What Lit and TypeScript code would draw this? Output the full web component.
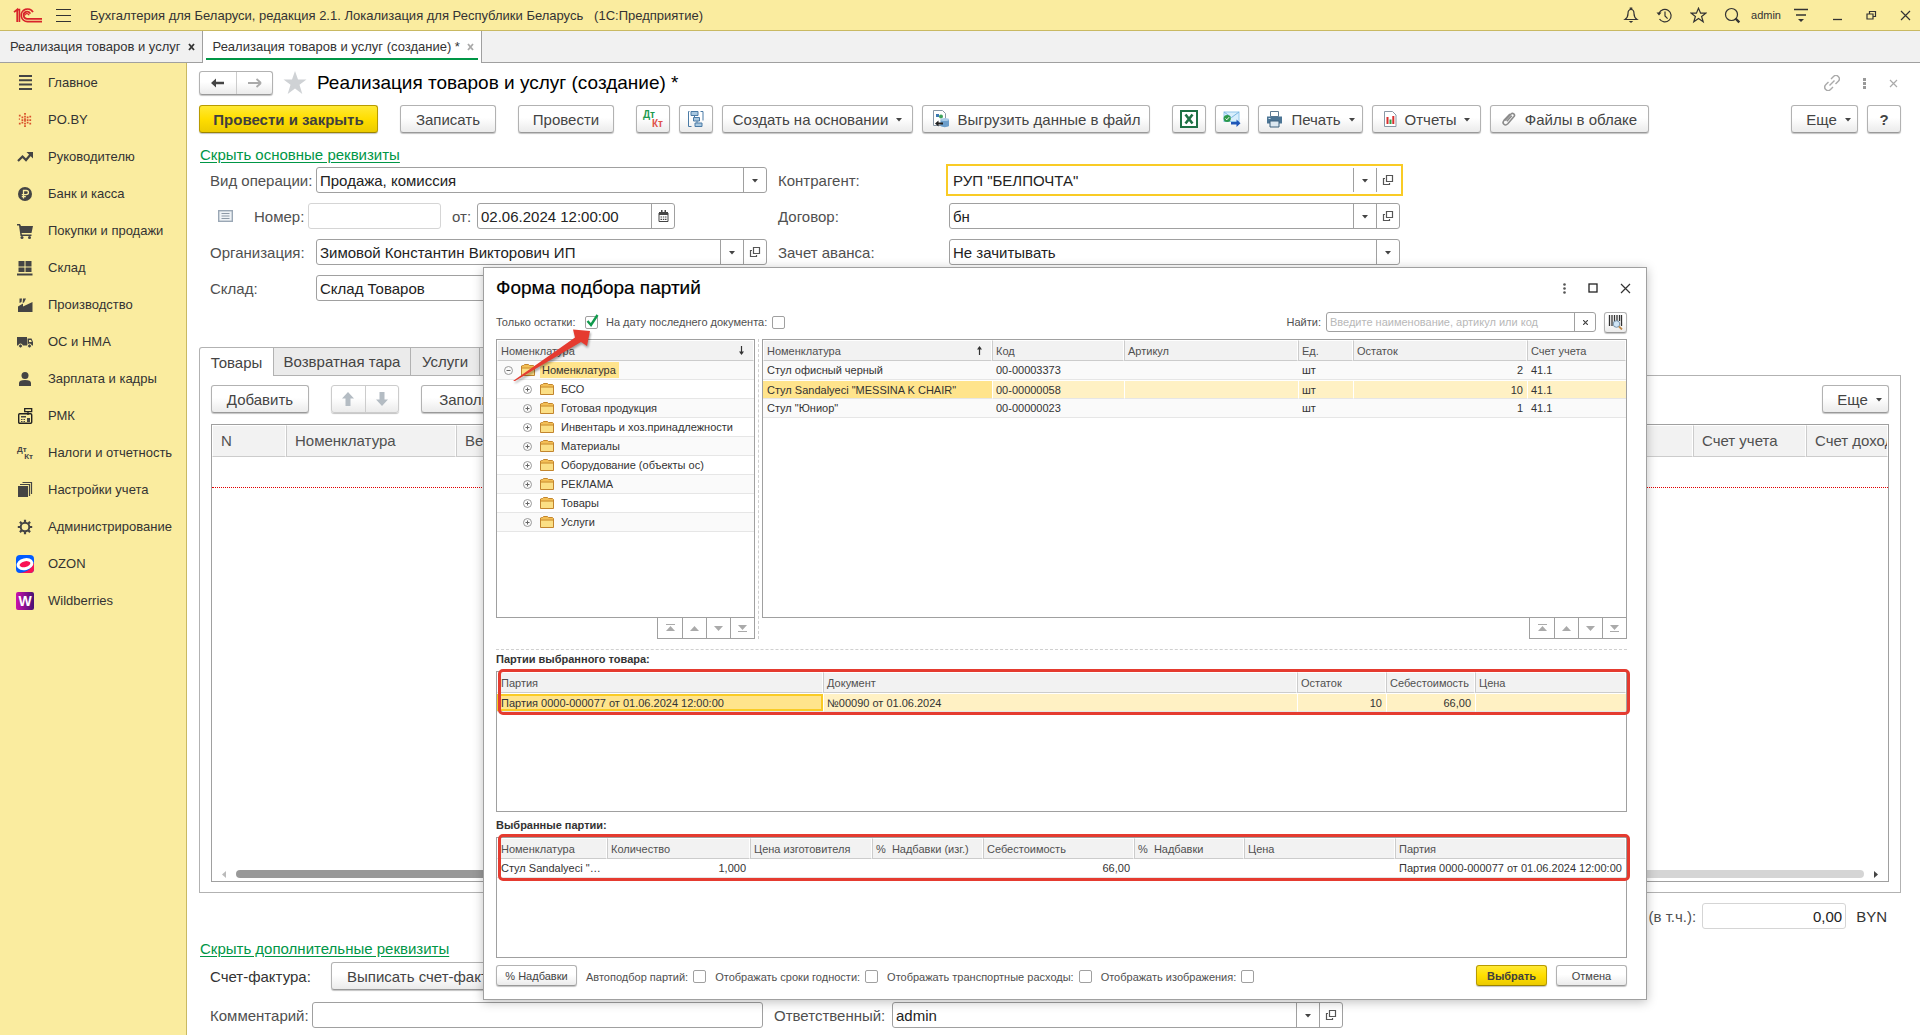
import { LitElement, html, svg, css, nothing, TemplateResult } from "lit";
import { customElement, property } from "lit/decorators.js";
import { classMap } from "lit/directives/class-map.js";

const icon = (body: unknown, w = 16, h = 16, box = `0 0 ${w} ${h}`) =>
  html`<svg width=${w} height=${h} viewBox=${box} fill="none" aria-hidden="true">${body}</svg>`;

const I: Record<string, () => TemplateResult> = {
  logo: () => icon(svg`<g stroke="#d8232a" stroke-width="1.7"><path d="M1 5.2 4.2 2.6V15M4.2 2.6H6.4V15"/><path d="M20 5.2A6.3 6.3 0 1 0 14.6 14.6H29"/><path d="M17.4 6.6A3.6 3.6 0 1 0 14.6 11.8H29"/><path d="M11.5 8.6a2.4 2.4 0 0 1 4.6-.4" stroke-width="1.3"/></g>`, 29, 17),
  burger: () => icon(svg`<path d="M0 1.5h15M0 7.5h15M0 13.5h15" stroke="#333" stroke-width="1.2"/>`, 15, 15),
  bell: () => icon(svg`<path d="M2 12.5c2-1.500 3-3 3-6C5 3.500 6.300 2.500 8 2.500s3 1 3 4c0 3 1 4.500 3 6zM7.300 2.300V1h1.400v1.300" stroke="#333" stroke-width="1.200"/><path d="M5.800 14h4.400L8 16z" fill="#333"/>`, 16, 17),
  history: () => icon(svg`<path d="M3 6.200A6.300 6.300 0 1 1 3.500 12M9 4.500V9l2.600 2.600" stroke="#333" stroke-width="1.200"/><path d="M.5 5.500h5L3 8.500z" fill="#333"/>`, 17, 17),
  star: () => icon(svg`<path d="M8.500 1.200l2.100 5h5.200l-4.200 3.300 1.600 5.300-4.700-3.200-4.700 3.200 1.600-5.300L1.200 6.200h5.200z" stroke="#333" stroke-width="1.200"/>`, 17, 17),
  search: () => icon(svg`<circle cx="7.500" cy="7.500" r="6" stroke="#333" stroke-width="1.200"/><path d="M11.500 11.500l3.800 3.800" stroke="#333" stroke-width="2.400"/>`, 17, 17),
  lines: () => icon(svg`<path d="M1 2.500h14M3 8h10" stroke="#333" stroke-width="1.300"/><path d="M5 12h6l-3 3z" fill="#333"/>`, 16, 16),
  min: () => icon(svg`<path d="M1 9.500h9" stroke="#333" stroke-width="1.300"/>`, 11, 11),
  restore: () => icon(svg`<path d="M1 4h6v5H1zM3.500 4V1.500H9.500v5H7" stroke="#333" stroke-width="1.200"/>`, 11, 11),
  close: () => icon(svg`<path d="M1 1l9 9M10 1l-9 9" stroke="#333" stroke-width="1.200"/>`, 11, 11),
  closeGrey: () => icon(svg`<path d="M1 1l7 7M8 1l-7 7" stroke="#aaa" stroke-width="1.200"/>`, 9, 9),
  tabClose: () => icon(svg`<path d="M1 1l5 6M6 1l-5 6" stroke="currentColor" stroke-width="1.800"/>`, 7, 8),
  link: () => icon(svg`<g stroke="#aaa" stroke-width="1.400"><path d="M7 4l2.500-2.500a3.300 3.300 0 0 1 4.800 4.700L11.500 9M9 12l-2.500 2.500a3.300 3.300 0 0 1-4.800-4.700L4.500 7M5.500 10.500l5-5"/></g>`, 16, 16),
  dotsGrey: () => icon(svg`<g fill="#999"><rect width="3" height="3"/><rect y="4" width="3" height="3"/><rect y="8" width="3" height="3"/></g>`, 3, 11),
  dots: () => icon(svg`<g fill="#555"><circle cx="1.500" cy="1.500" r="1.300"/><circle cx="1.500" cy="5.500" r="1.300"/><circle cx="1.500" cy="9.500" r="1.300"/></g>`, 3, 11),
  square: () => icon(svg`<rect x="1" y="1" width="8" height="8" stroke="#222" stroke-width="1.300"/>`, 10, 10),
  back: () => icon(svg`<path d="M1 6l5-4.500v3.200h8v2.600H6v3.200z" fill="#444"/>`, 15, 12),
  fwd: () => icon(svg`<path d="M14 6L9.500 2M14 6l-4.500 4M13 6H1" stroke="#aaa" stroke-width="1.800"/>`, 15, 12),
  bigStar: () => icon(svg`<path d="M12 0l3 8.500h8.500l-7 5.200 2.800 9.300L12 17.500 4.700 23l2.800-9.300L.5 8.500H9z" fill="#cfd2d5"/>`, 24, 24),
  caret: () => icon(svg`<path d="M0 1h6L3 4.500z" fill="#444"/>`, 6, 5),
  open: () => icon(svg`<path d="M4.500 1.500h6v6h-6zM3 4.500H1.500v6h6V9" stroke="#555" stroke-width="1.200"/>`, 12, 12),
  calendar: () => icon(svg`<path d="M1 3h9v8.500H1z" stroke="#444"/><path d="M1 2h9v3H1zM3 0h1.500v3H3zM6.500 0H8v3H6.500z" fill="#444"/><path d="M2.500 7H4M4.800 7h1.500M7 7h1.500M2.500 9.300H4M4.800 9.300h1.500M7 9.300h1.500" stroke="#444" stroke-width="1.200"/>`, 11, 12),
  note: () => icon(svg`<rect x=".7" y=".7" width="13.600" height="10.600" stroke="#9aa7b5" stroke-width="1.400" fill="#eef2f6"/><path d="M3.500 3.500h8M3.500 6h8M3.500 8.500h8" stroke="#8d99a6"/>`, 15, 12),
  struct: () => icon(svg`<g stroke="#4b7ba6"><path d="M4 1.500h7v4H4zM6.500 7.500h6v3.500h-6zM8 13h7v3.500H8z" fill="#a9c8e0"/><path d="M2.500 1.500h-1v15h3M13.500 1.500h2.500v9M7.500 5.500v2M10 11v2"/></g>`, 18, 18),
  upload: () => icon(svg`<path d="M1.500.5h9l3 3v12h-12z" fill="#fff" stroke="#8796a5"/><path d="M4 4h3v3H4z" fill="#3c78b4"/><circle cx="9" cy="6.500" r="2" fill="#3fa35b"/><path d="M8.500 9.500h8.500v6.500c-2 1.500-6.500 1.500-8.500 0z" fill="#6c9ecb"/><ellipse cx="12.800" cy="9.500" rx="4.200" ry="1.500" fill="#a9cbe8"/><path d="M3 13.500l3.500-3v2H11v2H6.500v2z" fill="#222"/>`, 18, 18),
  excel: () => icon(svg`<rect x="1" y="1" width="16" height="16" fill="#fff" stroke="#1d7044" stroke-width="2"/><path d="M5.500 4.500l7 9M12.500 4.500l-7 9" stroke="#1d7044" stroke-width="2.600"/>`, 18, 18),
  mail: () => icon(svg`<rect x="1" y="2" width="15" height="9.500" fill="#d8eefc" stroke="#90c5ea"/><path d="M1 2l7.500 5.500L16 2" stroke="#78b5e0"/><circle cx="4.200" cy="8.500" r="3.600" fill="#2c9a4b"/><path d="M2.500 8.500l1.300 1.300 2.300-2.600" stroke="#fff"/><path d="M8 12h5.500V9.500L17.500 13.200 13.500 17v-2.500H8z" fill="#1f56b8"/>`, 18, 18),
  print: () => icon(svg`<path d="M4.500.5h8v5h-8z" fill="#fff" stroke="#5f7b93"/><path d="M1 5.500h15v7H1z" fill="#4c7595"/><path d="M4 10h9v6H4z" fill="#dce8f1" stroke="#3c607d"/><path d="M2.500 7.500h2" stroke="#cfe1ef"/>`, 17, 17),
  report: () => icon(svg`<path d="M1.500.5h8l3.500 3.500v11.500h-11.500z" fill="#fff" stroke="#8a98a5"/><path d="M3.500 6h2v7h-2z" fill="#d92e2e"/><path d="M6.500 8.500h2V13h-2z" fill="#2e9e46"/><path d="M9.300 5h2v8h-2z" fill="#d92e2e"/>`, 14, 16),
  clip: () => icon(svg`<path d="M3 9.500l6-6.500c1.800-1.800 4.600.6 3 2.600L5.800 12.800c-2.800 2.800-6.300-.4-3.800-3.400L8 3M4.800 10.300l5-5.500" stroke="#8b8b8b" stroke-width="1.600"/>`, 15, 16),
  up: () => icon(svg`<path d="M7 0l6 6.500h-3.500V14h-5V6.500H1z" fill="#b4bcc3"/>`, 14, 14),
  down: () => icon(svg`<path d="M7 14l6-6.500h-3.500V0h-5v7.500H1z" fill="#b4bcc3"/>`, 14, 14),
  barcode: () => icon(svg`<path d="M1.500 0v11M4 0v11M6.500 0v8M9 0v6M11.500 0v6M13.500 0v11" stroke="#333" stroke-width="1.300"/><circle cx="8.500" cy="9" r="3.300" fill="#cfe4f5" stroke="#7894ab"/><path d="M11 11.500l3 3" stroke="#c08a4a" stroke-width="1.800"/>`, 15, 15),
  plus: () => icon(svg`<circle cx="4.500" cy="4.500" r="4" stroke="#999"/><path d="M2.500 4.500h4M4.500 2.500v4" stroke="#666"/>`, 9, 9),
  minus: () => icon(svg`<circle cx="4.500" cy="4.500" r="4" stroke="#999"/><path d="M2.500 4.500h4" stroke="#666"/>`, 9, 9),
  folder: () => icon(svg`<path d="M.5 11.500v-9.500l1-.5h1l1-1h4l1 1h4l1 1v9z" fill="#f3bf55" stroke="#c2852e"/><path d="M1 4.500h12v6.500H1z" fill="#fbdf85"/><path d="M.5 4h13" stroke="#c2852e" stroke-width=".8"/>`, 14, 12),
  first: () => icon(svg`<path d="M0 .5h9" stroke="#aaa"/><path d="M0 7l4.500-5L9 7z" fill="#aaa"/>`, 9, 8),
  prev: () => icon(svg`<path d="M0 6l4.500-5L9 6z" fill="#aaa"/>`, 9, 7),
  next: () => icon(svg`<path d="M0 1l4.500 5L9 1z" fill="#aaa"/>`, 9, 7),
  last: () => icon(svg`<path d="M0 7.500h9" stroke="#aaa"/><path d="M0 1l4.500 5L9 1z" fill="#aaa"/>`, 9, 8),
  sortDown: () => icon(svg`<path d="M3.500 0v8" stroke="#333" stroke-width="1.200"/><path d="M1 5.500h5L3.500 9z" fill="#333"/>`, 7, 9),
  sortUp: () => icon(svg`<path d="M3.500 9V1" stroke="#333" stroke-width="1.200"/><path d="M1 3.500h5L3.500 0z" fill="#333"/>`, 7, 9),
  triL: () => icon(svg`<path d="M5 0v7L1 3.500z" fill="#bbb"/>`, 5, 7),
  triR: () => icon(svg`<path d="M0 0v7l4-3.500z" fill="#444"/>`, 5, 7),
  // sidebar
  main: () => icon(svg`<path d="M2 2h13M2 6.300h13M2 10.600h13M2 15h13" stroke="#444" stroke-width="2"/>`, 16, 17),
  poby: () => icon(svg`<g fill="#d9512c"><path d="M7 0h2v2H7zM7 3h2v2H7zM7 6h2v4H7zM7 11h2v2H7zM7 14h2v2H7zM4 4h2v2H4zM10 4h2v2h-2zM4 7h2v2H4zM10 7h2v2h-2zM4 10h2v2H4zM10 10h2v2h-2zM1 2h2v2H1zM13 3h2v2h-2zM1 6h1v2H1zM13 7h2v2h-2zM1 11h2v2H1zM13 11h2v2h-2z"/></g>`, 14, 14, "0 0 16 16"),
  trend: () => icon(svg`<path d="M1 12l4.500-4.500L9 11l5-6" stroke="#444" stroke-width="2.200"/><path d="M9.500 3H16v6.500z" fill="#444"/>`),
  bank: () => icon(svg`<circle cx="8" cy="8" r="7" fill="#444"/><path d="M6.500 12.500v-8h2.700c3 0 3 4.200 0 4.200H4.800M4.800 10.700h4" stroke="#faec9f" stroke-width="1.300"/>`),
  cart: () => icon(svg`<path d="M0 1h3l1 2h12l-1.500 7H4.500L5 11.500h9.500V13H3.500L2 2.500H0z" fill="#444"/><circle cx="5" cy="14.500" r="1.500" fill="#444"/><circle cx="12.500" cy="14.500" r="1.500" fill="#444"/>`),
  store: () => icon(svg`<path d="M1.500 1h6v5.500h-6zM8.500 1h6v5.500h-6zM1.500 7.500h6V12h-6zM8.500 7.500h6V12h-6zM0 13.500h15.500v2H0z" fill="#444"/>`),
  factory: () => icon(svg`<path d="M1 15V9.500L6 6.500V9.500L15.500 5v10zM2.500 1.500H5L4.500 5 2.500 6zM6 1.500h3L7 5.500 5.700 6z" fill="#444"/>`),
  truck: () => icon(svg`<path d="M0 3h10v8.500H0zM10.500 4.500h4L16 8v3.500h-5.500z" fill="#444"/><path d="M12 6h2l.8 2H12z" fill="#faec9f"/><circle cx="3.500" cy="12" r="2" fill="#444" stroke="#faec9f"/><circle cx="12.500" cy="12" r="2" fill="#444" stroke="#faec9f"/>`),
  person: () => icon(svg`<circle cx="8" cy="4.500" r="3.500" fill="#444"/><path d="M2 15v-3c0-2 2-3 6-3s6 1 6 3v3z" fill="#444"/>`),
  pos: () => icon(svg`<rect x="1.700" y="5.700" width="13" height="9.600" rx="1" stroke="#222" stroke-width="1.400"/><path d="M7.700.7h7v3h-7zM11 4v3" stroke="#222" stroke-width="1.300"/><path d="M4 8h5v1.500H4zM4 11h1.500v1H4zM6.500 11H8v1H6.500zM4 13h1.500v1H4zM6.500 13H8v1H6.500zM10 10h3v4h-3z" fill="#444"/>`),
  books: () => icon(svg`<path d="M1 5h10v11H1z" fill="#444"/><path d="M3 3.500h9.500V15M5.500 1.500h9V13" stroke="#444" stroke-width="1.200"/>`, 16, 17),
  gear: () => icon(svg`<circle cx="8" cy="8" r="4.300" stroke="#444" stroke-width="2"/><path d="M8 .8v2.700M8 12.500v2.700M.8 8h2.700M12.500 8h2.700M2.900 2.900l1.900 1.900M11.200 11.200l1.900 1.900M13.100 2.900l-1.900 1.900M4.800 11.200l-1.900 1.900" stroke="#444" stroke-width="2.200"/>`),
  ozon: () => icon(svg`<rect width="18" height="18" rx="4" fill="#005bff"/><path d="M2 18c8 0 14-4 16-11v7a4 4 0 0 1-4 4z" fill="#f91155"/><ellipse cx="9" cy="9.200" rx="7" ry="4.400" transform="rotate(-14 9 9.200)" fill="#f91155" stroke="#fff" stroke-width="3"/>`, 18, 18),
};

const dtkt = () => html`<span class="dtkt"><b>Дт</b><b>Кт</b></span>`;

const base = css`
  *, *::before, *::after { box-sizing: border-box; }
  svg { display: block; flex: none; }
  button, input, select { font: inherit; color: inherit; margin: 0; }
  button {
    display: inline-flex; align-items: center; justify-content: center; gap: 8px;
    padding: 0; border: 0; background: none; white-space: nowrap;
  }
  .btn {
    height: 28px; border: 1px solid #b2b2b2; border-bottom-color: #999; border-radius: 3px;
    background: linear-gradient(#fff 45%, #ebebeb); box-shadow: 0 1px 1px #c4c4c4; color: #444;
  }
  .primary {
    border-color: #b89b00; border-bottom-color: #9c8400; font-weight: bold; color: #3f3f3f;
    background: linear-gradient(#ffe935, #ffde00 50%, #eccb00);
  }
  .field {
    display: flex; height: 26px; border: 1px solid #a0a0a0; border-radius: 3px; background: #fff;
    color: #222; overflow: hidden;
  }
  .field input { flex: 1; min-width: 0; width: 0; border: 0; padding: 0 3px; background: none; outline: 0; }
  .field button { width: 23px; border-left: 1px solid #a0a0a0; }
  table { border-collapse: separate; border-spacing: 0; table-layout: fixed; width: 100%; }
  th, td { font-weight: normal; text-align: left; white-space: nowrap; overflow: hidden; padding: 0; }
`;

@customElement("top-bar")
export class TopBar extends LitElement {
  static styles = [base, css`
    :host {
      display: flex; align-items: center; height: 31px; padding: 0 9px 0 13px; background: #faec9f;
      border-bottom: 1px solid #c9b962; font-size: 13px; color: #333;
    }
    .menu { margin: 0 19px 0 14px; }
    .name { flex: 1; white-space: pre; }
    .tools { display: flex; align-items: center; gap: 17px; }
    .user { font-size: 11px; margin: 0 -5px 0 -7px; }
    .win { display: flex; align-items: center; gap: 23px; margin-left: 6px; }
  `];
  render() {
    return html`
      ${I.logo()}
      <button class="menu" aria-label="Меню">${I.burger()}</button>
      <span class="name">Бухгалтерия для Беларуси, редакция 2.1. Локализация для Республики Беларусь   (1С:Предприятие)</span>
      <div class="tools">
        <button aria-label="Уведомления">${I.bell()}</button>
        <button aria-label="История">${I.history()}</button>
        <button aria-label="Избранное">${I.star()}</button>
        <button aria-label="Поиск">${I.search()}</button>
        <span class="user">admin</span>
        <button aria-label="Настройки">${I.lines()}</button>
        <div class="win">
          <button aria-label="Свернуть">${I.min()}</button>
          <button aria-label="Восстановить">${I.restore()}</button>
          <button aria-label="Закрыть">${I.close()}</button>
        </div>
      </div>`;
  }
}

@customElement("side-nav")
export class SideNav extends LitElement {
  static styles = [base, css`
    :host { display: block; background: #faec9f; border-right: 1px solid #c9b962; font-size: 13px; padding-top: 1px; }
    a {
      display: flex; align-items: center; height: 37px; gap: 14px; padding-left: 16px;
      color: #333; text-decoration: none; white-space: nowrap;
    }
    .ico { width: 18px; display: flex; justify-content: center; }
    .dtkt { display: flex; flex-direction: column; font-size: 8px; line-height: 7px; color: #444; width: 16px; }
    .dtkt b:last-child { text-align: right; }
    .wb {
      width: 18px; height: 18px; border-radius: 2px; color: #fff; font-weight: bold; font-size: 14px;
      line-height: 18px; text-align: center; background: linear-gradient(90deg, #cb11ab, #481173);
    }
  `];
  render() {
    const items: [TemplateResult, string][] = [
      [I.main(), "Главное"], [I.poby(), "PO.BY"], [I.trend(), "Руководителю"], [I.bank(), "Банк и касса"],
      [I.cart(), "Покупки и продажи"], [I.store(), "Склад"], [I.factory(), "Производство"],
      [I.truck(), "ОС и НМА"], [I.person(), "Зарплата и кадры"], [I.pos(), "РМК"],
      [dtkt(), "Налоги и отчетность"], [I.books(), "Настройки учета"], [I.gear(), "Администрирование"],
      [I.ozon(), "OZON"], [html`<span class="wb">W</span>`, "Wildberries"],
    ];
    return html`<nav>${items.map(([i, t]) => html`<a href="#"><span class="ico">${i}</span>${t}</a>`)}</nav>`;
  }
}

type Col = { t: string; w?: number; right?: boolean; sort?: "up" | "down" };
type Row = { cells: unknown[]; selected?: boolean };

@customElement("data-grid")
export class DataGrid extends LitElement {
  @property({ attribute: false }) cols: Col[] = [];
  @property({ attribute: false }) rows: Row[] = [];
  @property({ type: Boolean }) focused = false;
  @property({ type: Boolean }) plain = false;
  static styles = [base, css`
    :host { display: block; border: 1px solid #a0a0a0; background: #fff; overflow: hidden; font-size: 11px; color: #333; }
    th {
      height: 21px; padding: 0 3px; color: #505050; background: #f2f2f2; border: 1px solid #fff;
      border-bottom: 1px solid #ccc;
    }
    th + th { border-left: 1px solid #ccc; }
    .head { display: flex; justify-content: space-between; align-items: center; padding-right: 5px; white-space: pre; }
    td { height: 19px; padding: 0 4px; border-bottom: 1px solid #e6e6e6; text-overflow: ellipsis; }
    tr:nth-child(odd) td { background: #fafafa; }
    :host([plain]) tr td { background: #fff; }
    td.right { text-align: right; }
    tr.selected td {
      background: #fff1c4; border-left: 1px solid #fff; border-top: 1px solid #fff;
      padding-left: 3px;
    }
    tbody tr.selected td:first-child { background: #ffe48c; border-left: 0; padding-left: 4px; }
    :host([focused]) tr.selected td:first-child { box-shadow: inset 0 0 0 2px #f9cb25; }
    :host([focused]) tbody tr.selected td { background-color: #fff1c4; }
    :host([focused]) tbody tr.selected td:first-child { background-color: #ffe48c; }
    .tree { display: flex; align-items: center; height: 18px; }
    .tree.child { padding-left: 19px; }
    .tree .t { padding: 0 3px 0 2px; margin-left: 5px; line-height: 16px; }
    .tree.root .t { background: #ffe48c; }
    .tree button { margin: 0 8px 0 3px; }
  `];
  render() {
    return html`<table>
      <colgroup>${this.cols.map((c) => (c.w ? html`<col style="width:${c.w}px">` : html`<col>`))}</colgroup>
      <thead><tr>${this.cols.map((c) => html`<th scope="col"><div class="head">${c.t}${
        c.sort === "up" ? I.sortUp() : c.sort === "down" ? I.sortDown() : nothing}</div></th>`)}</tr></thead>
      <tbody>${this.rows.map((r) => html`<tr class=${classMap({ selected: !!r.selected })}>${
        r.cells.map((v, i) => html`<td class=${classMap({ right: !!this.cols[i].right })}>${v}</td>`)}</tr>`)}</tbody>
    </table>`;
  }
}

@customElement("batch-dialog")
export class BatchDialog extends LitElement {
  static styles = [base, css`
    :host {
      display: flex; flex-direction: column; background: #fff; border: 1px solid #a0a0a0;
      box-shadow: 0 2px 10px rgba(0, 0, 0, 0.25); padding: 8px 19px 13px 12px; font-size: 11px; color: #505050;
    }
    header { display: flex; align-items: center; height: 24px; margin-right: -4px; }
    h2 { flex: 1; margin: 0; font-size: 19px; font-weight: normal; color: #000; -webkit-text-stroke: 0.2px #000; }
    .controls { display: flex; align-items: center; gap: 22px; }
    .filters { display: flex; align-items: center; height: 22px; margin: 11px 0 6px; }
    label { display: flex; align-items: center; gap: 5px; white-space: nowrap; }
    .filters label { margin-right: 8px; }
    .filters label:first-child { min-width: 102px; justify-content: space-between; }
    .box { position: relative; width: 13px; height: 13px; }
    .box input {
      appearance: none; display: block; width: 13px; height: 13px; border: 1px solid #a0a0a0;
      border-radius: 2px; background: #fff; margin: 0;
    }
    .box svg { position: absolute; left: 1px; top: -2px; pointer-events: none; }
    .find { margin-left: auto; }
    .find .field { width: 270px; height: 20px; font-size: 11px; }
    .find .field button { width: 21px; }
    ::placeholder { color: #b8b8b8; opacity: 1; }
    .barcode { width: 23px; height: 21px; }
    .upper { display: flex; flex: 301 1 0; min-height: 180px; }
    .pane { display: flex; flex-direction: column; }
    .left { width: 259px; flex: none; }
    .right { flex: 1; min-width: 0; }
    .grow { flex: 1; min-height: 0; }
    .splitter { width: 7px; display: flex; justify-content: center; }
    .splitter::before { content: ""; border-left: 1px dashed #d0d0d0; }
    .nav { display: flex; align-self: flex-end; border: 1px solid #a0a0a0; border-top: 0; height: 21px; }
    .nav button { width: 24px; }
    .nav button + button { border-left: 1px solid #a0a0a0; }
    .hsplit { margin-top: 10px; border-top: 1px dashed #d0d0d0; }
    h3 { margin: 0; font-size: 11px; line-height: 13px; color: #333; padding: 3px 0 5px; }
    .caption2 { padding: 7px 0 5px; }
    .framed { position: relative; display: flex; flex-direction: column; }
    .mid { flex: 141 1 0; }
    .low { flex: 121 1 0; }
    .frame {
      position: absolute; left: 2px; right: -3px; top: -2px; height: 46px; border: 3px solid #e53b30;
      border-radius: 5px; pointer-events: none;
    }
    .low .frame { top: -3px; height: 47px; }
    footer { display: flex; align-items: center; height: 21px; margin-top: 7px; gap: 9px; }
    footer label { height: 21px; padding-top: 2px; }
    .mark { width: 81px; height: 21px; gap: 4px; }
    .fill { flex: 1; }
    .small { width: 71px; height: 21px; }
    .arrow { position: absolute; left: 26px; top: 58px; pointer-events: none; filter: drop-shadow(1px 2px 1px rgba(0, 0, 0, 0.35)); }
  `];

  private check(text: string, checked = false) {
    return html`<label>${text}<span class="box"><input type="checkbox" .checked=${checked}>${
      checked ? icon(svg`<path d="M1.500 7l3.500 4L11.500 1" stroke="#109a4c" stroke-width="2.400"/>`, 13, 13) : nothing}</span></label>`;
  }
  private nav() {
    return html`<div class="nav">
      <button aria-label="В начало">${I.first()}</button><button aria-label="Вверх">${I.prev()}</button>
      <button aria-label="Вниз">${I.next()}</button><button aria-label="В конец">${I.last()}</button></div>`;
  }
  private node(text: string, root = false) {
    return html`<div class="tree ${root ? "root" : "child"}"><button aria-label=${root ? "Свернуть" : "Развернуть"}>${
      root ? I.minus() : I.plus()}</button>${I.folder()}<span class="t">${text}</span></div>`;
  }
  render() {
    const groups = ["БСО", "Готовая продукция", "Инвентарь и хоз.принадлежности", "Материалы",
      "Оборудование (объекты ос)", "РЕКЛАМА", "Товары", "Услуги"];
    return html`
      <header>
        <h2>Форма подбора партий</h2>
        <div class="controls">
          <button aria-label="Дополнительно">${I.dots()}</button>
          <button aria-label="Развернуть">${I.square()}</button>
          <button aria-label="Закрыть">${I.close()}</button>
        </div>
      </header>
      <div class="filters">
        ${this.check("Только остатки:", true)}
        ${this.check("На дату последнего документа:")}
        <label class="find">Найти:<span class="field"><input type="text" placeholder="Введите наименование, артикул или код">
          <button aria-label="Очистить">${icon(svg`<path d="M0 0l5 5M5 0L0 5" stroke="#444" stroke-width="1.200"/>`, 5, 5)}</button></span></label>
        <button class="btn barcode" aria-label="Поиск по штрихкоду">${I.barcode()}</button>
      </div>
      <div class="upper">
        <div class="pane left">
          <data-grid class="grow" .cols=${[{ t: "Номенклатура", sort: "down" }]}
            .rows=${[{ cells: [this.node("Номенклатура", true)] }, ...groups.map((g) => ({ cells: [this.node(g)] }))]}></data-grid>
          ${this.nav()}
        </div>
        <div class="splitter"></div>
        <div class="pane right">
          <data-grid class="grow"
            .cols=${[{ t: "Номенклатура", w: 229, sort: "up" }, { t: "Код", w: 132 }, { t: "Артикул", w: 174 },
              { t: "Ед.", w: 55 }, { t: "Остаток", w: 174, right: true }, { t: "Счет учета" }]}
            .rows=${[
              { cells: ["Стул офисный черный", "00-00003373", "", "шт", "2", "41.1"] },
              { cells: ['Стул Sandalyeci "MESSINA K CHAIR"', "00-00000058", "", "шт", "10", "41.1"], selected: true },
              { cells: ['Стул "Юниор"', "00-00000023", "", "шт", "1", "41.1"] },
            ]}></data-grid>
          ${this.nav()}
        </div>
      </div>
      <div class="hsplit"></div>
      <h3>Партии выбранного товара:</h3>
      <div class="framed mid">
        <data-grid class="grow" focused
          .cols=${[{ t: "Партия", w: 326 }, { t: "Документ", w: 474 }, { t: "Остаток", w: 89, right: true },
            { t: "Себестоимость", w: 89, right: true }, { t: "Цена" }]}
          .rows=${[{ cells: ["Партия 0000-000077 от 01.06.2024 12:00:00", "№00090 от 01.06.2024", "10", "66,00", ""], selected: true }]}></data-grid>
        <div class="frame"></div>
      </div>
      <h3 class="caption2">Выбранные партии:</h3>
      <div class="framed low">
        <data-grid class="grow" plain
          .cols=${[{ t: "Номенклатура", w: 110 }, { t: "Количество", w: 143, right: true }, { t: "Цена изготовителя", w: 122 },
            { t: "%  Надбавки (изг.)", w: 111 }, { t: "Себестоимость", w: 151, right: true }, { t: "%  Надбавки", w: 110 },
            { t: "Цена", w: 151 }, { t: "Партия" }]}
          .rows=${[{ cells: ['Стул Sandalyeci "MESSINA K CHAIR"', "1,000", "", "", "66,00", "", "", "Партия 0000-000077 от 01.06.2024 12:00:00"] }]}></data-grid>
        <div class="frame"></div>
      </div>
      <footer>
        <button class="btn mark">% Надбавки</button>
        ${this.check("Автоподбор партий:")}
        ${this.check("Отображать сроки годности:")}
        ${this.check("Отображать транспортные расходы:")}
        ${this.check("Отображать изображения:")}
        <span class="fill"></span>
        <button class="btn primary small">Выбрать</button>
        <button class="btn small">Отмена</button>
      </footer>
      <svg class="arrow" width="84" height="58" viewBox="0 0 84 58" aria-hidden="true">
        <path d="M3 55L65 11.500 63 3.500 80 5 77 20 71 16 5 55z" fill="#e53b30"/>
      </svg>`;
  }
}

@customElement("app-root")
export class AppRoot extends LitElement {
  static styles = [base, css`
    :host {
      display: flex; flex-direction: column; position: relative; min-height: 100vh; background: #fff;
      font-family: "Liberation Sans", Arial, sans-serif; font-size: 15px; color: #505050; overflow: hidden;
    }
    .tabs { display: flex; height: 32px; background: #f1f1f1; border-bottom: 1px solid #a0a0a0; font-size: 13px; color: #333; }
    .tab {
      display: flex; align-items: center; gap: 7px; padding: 0 7px 0 10px; border-right: 1px solid #a0a0a0; height: 31px;
    }
    .tab button { color: #333; }
    .tab.active { background: linear-gradient(#009646, #009646) 3px 27px / calc(100% - 6px) 2px no-repeat #fff; height: 32px; padding-bottom: 1px; }
    .tab.active button { color: #aaa; }
    .shell { display: flex; flex: 1; }
    side-nav { width: 187px; flex: none; }
    main { flex: 1; min-width: 0; display: flex; flex-direction: column; padding: 8px 19px 7px 12px; }
    .title { display: flex; align-items: center; height: 24px; gap: 10px; }
    .hist { display: flex; width: 74px; height: 24px; padding: 0; gap: 0; }
    .hist button { flex: 1; height: 100%; }
    .hist button + button { border-left: 1px solid #ccc; }
    h1 { flex: 1; margin: 0; font-size: 19px; font-weight: normal; color: #000; white-space: nowrap; }
    .title-tools { display: flex; align-items: center; gap: 23px; padding-right: 3px; }
    .bar { display: flex; height: 28px; margin-top: 10px; }
    .sq { width: 34px; }
    .group { display: flex; gap: 9px; }
    .main-btn { width: 179px; margin-right: 22px; }
    .save { width: 96px; margin-right: 22px; }
    .based { width: 191px; }
    .export { width: 228px; margin-right: 22px; }
    .print { width: 105px; }
    .reports { width: 109px; }
    .files { width: 159px; }
    .more { width: 67px; padding-left: 8px; }
    .fill { flex: 1; }
    .dtkt { display: flex; flex-direction: column; width: 20px; font-size: 10px; line-height: 9px; }
    .dtkt b:first-child { color: #1d9a4e; text-align: left; }
    .dtkt b:last-child { color: #e0524a; text-align: right; }
    .link { color: #009646; text-decoration: underline; text-underline-offset: 2px; align-self: flex-start; line-height: 18px; padding-left: 1px; }
    .toggle { margin-top: 13px; }
    .form { display: grid; grid-template-columns: 557px 625px; column-gap: 11px; row-gap: 10px; margin: 3px 0 0 11px; }
    .row { display: flex; align-items: center; height: 26px; }
    .row > .field { flex: 1; }
    .row > label { width: 106px; white-space: nowrap; flex: none; }
    .row.r > label { width: 171px; }
    .row.r { padding-right: 3px; }
    .row .num { width: 133px; flex: none; border-color: #d5d5d5; }
    .row .date { width: 198px; flex: none; }
    .row > .numlabel { width: 54px; margin-left: 21px; }
    .row > .datelabel { width: 25px; margin-left: 11px; }
    .note { margin-left: 8px; }
    .field.active { border: 2px solid #f9cb25; height: 32px; border-radius: 0; margin: 0 -3px; padding: 2px; }
    .pick { display: grid; grid-template-columns: 1fr 23px; }
    .pick select { grid-area: 1 / 1 / 2 / 3; appearance: none; border: 0; background: none; padding: 0 3px; outline: 0; }
    .pick span { grid-area: 1 / 2; display: flex; align-items: center; justify-content: center; border-left: 1px solid #a0a0a0; pointer-events: none; }
    .subtabs { display: flex; height: 28px; margin-top: 46px; }
    .subtabs button {
      border: 1px solid #b2b2b2; border-bottom: 0; border-left-width: 0; background: #ebebeb; height: 28px; color: #444; width: 69px;
    }
    .subtabs .on { background: #fff; width: 75px; height: 29px; border-left-width: 1px; border-radius: 3px 0 0 0; position: relative; z-index: 1; }
    .subtabs .w2 { width: 137px; }
    .panel { flex: 1; display: flex; flex-direction: column; border: 1px solid #b2b2b2; padding: 9px 11px 10px; }
    .panel-bar { display: flex; height: 28px; margin-bottom: 11px; }
    .add { width: 98px; }
    .move { width: 68px; height: 28px; margin: 0 22px; border-color: #ccc; }
    .fillbtn { width: 110px; }
    .lines { flex: 1; display: flex; flex-direction: column; border: 1px solid #a0a0a0; min-width: 0; overflow: hidden; }
    .lines th { height: 32px; padding: 0 8px 2px; background: #f2f2f2; border: 1px solid #fff; border-bottom: 1px solid #ccc; }
    .lines th + th { border-left: 1px solid #ccc; }
    .lines td { height: 31px; border-bottom: 1px dotted #e00000; }
    .c1 { width: 74px; } .c2 { width: 170px; } .c4 { width: 113px; } .c5 { width: 82px; }
    .scroll { margin-top: auto; display: flex; align-items: center; gap: 10px; padding: 0 9px 3px; }
    .thumb { flex: 1; height: 8px; border-radius: 4px; background: linear-gradient(90deg, #999 50%, #d5d5d5 50%); }
    .totals { display: flex; align-items: center; justify-content: flex-end; gap: 6px; height: 26px; margin: 10px 14px 0 0; }
    .totals .field { width: 144px; border-color: #d5d5d5; }
    .totals input { text-align: right; }
    .totals .cur { margin-left: 4px; color: #333; }
    .extra { margin-top: 11px; }
    .inv { margin: 4px 0 0 11px; height: 28px; }
    .inv > .cap { width: 121px; color: #333; }
    .invbtn { width: 196px; }
    .foot { display: flex; align-items: center; height: 26px; margin: 12px 0 0 11px; }
    .foot label { white-space: nowrap; }
    .foot .comment { width: 451px; margin-right: 11px; }
    .foot .lc { width: 102px; }
    .foot .lr { width: 118px; }
    .foot .resp { width: 451px; }
    batch-dialog { position: absolute; left: 483px; right: 273px; top: 267px; bottom: 35px; }
  `];

  private drop() { return html`<button aria-label="Выбрать из списка">${I.caret()}</button>`; }
  private opener() { return html`<button aria-label="Открыть">${I.open()}</button>`; }

  render() {
    return html`
      <top-bar></top-bar>
      <div class="tabs">
        <div class="tab">Реализация товаров и услуг<button aria-label="Закрыть вкладку">${I.tabClose()}</button></div>
        <div class="tab active">Реализация товаров и услуг (создание) *<button aria-label="Закрыть вкладку">${I.tabClose()}</button></div>
      </div>
      <div class="shell">
        <side-nav></side-nav>
        <main>
          <div class="title">
            <div class="btn hist"><button aria-label="Назад">${I.back()}</button><button aria-label="Вперед">${I.fwd()}</button></div>
            ${I.bigStar()}
            <h1>Реализация товаров и услуг (создание) *</h1>
            <div class="title-tools">
              <button aria-label="Ссылка">${I.link()}</button>
              <button aria-label="Дополнительно">${I.dotsGrey()}</button>
              <button aria-label="Закрыть">${I.closeGrey()}</button>
            </div>
          </div>
          <div class="bar">
            <button class="btn primary main-btn">Провести и закрыть</button>
            <button class="btn save">Записать</button>
            <button class="btn save">Провести</button>
            <div class="group">
              <button class="btn sq" aria-label="Проводки">${dtkt()}</button>
              <button class="btn sq" aria-label="Структура подчиненности">${I.struct()}</button>
              <button class="btn based">Создать на основании ${I.caret()}</button>
              <button class="btn export">${I.upload()}Выгрузить данные в файл</button>
            </div>
            <div class="group">
              <button class="btn sq" aria-label="Excel">${I.excel()}</button>
              <button class="btn sq" aria-label="Отправить">${I.mail()}</button>
              <button class="btn print">${I.print()}Печать ${I.caret()}</button>
              <button class="btn reports">${I.report()}Отчеты ${I.caret()}</button>
              <button class="btn files">${I.clip()}Файлы в облаке</button>
            </div>
            <span class="fill"></span>
            <div class="group">
              <button class="btn more">Еще ${I.caret()}</button>
              <button class="btn sq" aria-label="Справка"><b>?</b></button>
            </div>
          </div>
          <a class="link toggle" href="#">Скрыть основные реквизиты</a>
          <div class="form">
            <div class="row"><label for="op">Вид операции:</label>
              <div class="field pick"><select id="op"><option>Продажа, комиссия</option></select><span>${I.caret()}</span></div></div>
            <div class="row r"><label for="ctr">Контрагент:</label>
              <div class="field active"><input id="ctr" type="text" value='РУП "БЕЛПОЧТА"'>${this.drop()}${this.opener()}</div></div>
            <div class="row"><span class="note">${I.note()}</span><label class="numlabel" for="num">Номер:</label>
              <div class="field num"><input id="num" type="text"></div><label class="datelabel" for="date">от:</label>
              <div class="field date"><input id="date" type="text" value="02.06.2024 12:00:00"><button aria-label="Календарь">${I.calendar()}</button></div></div>
            <div class="row r"><label for="dog">Договор:</label>
              <div class="field"><input id="dog" type="text" value="бн">${this.drop()}${this.opener()}</div></div>
            <div class="row"><label for="org">Организация:</label>
              <div class="field"><input id="org" type="text" value="Зимовой Константин Викторович ИП">${this.drop()}${this.opener()}</div></div>
            <div class="row r"><label for="adv">Зачет аванса:</label>
              <div class="field pick"><select id="adv"><option>Не зачитывать</option></select><span>${I.caret()}</span></div></div>
            <div class="row"><label for="wh">Склад:</label>
              <div class="field"><input id="wh" type="text" value="Склад Товаров">${this.drop()}${this.opener()}</div></div>
          </div>
          <div class="subtabs">
            <button class="on">Товары</button><button class="w2">Возвратная тара</button><button>Услуги</button><button aria-label="Еще вкладка"></button>
          </div>
          <div class="panel">
            <div class="panel-bar">
              <button class="btn add">Добавить</button>
              <div class="btn hist move"><button aria-label="Вверх">${I.up()}</button><button aria-label="Вниз">${I.down()}</button></div>
              <button class="btn fillbtn">Заполнить</button>
              <span class="fill"></span>
              <button class="btn more">Еще ${I.caret()}</button>
            </div>
            <div class="lines">
              <table>
                <colgroup><col class="c1"><col class="c2"><col><col class="c4"><col class="c5"></colgroup>
                <thead><tr><th scope="col">N</th><th scope="col">Номенклатура</th><th scope="col">Вес</th><th scope="col">Счет учета</th><th scope="col">Счет доходов</th></tr></thead>
                <tbody><tr><td colspan="5"></td></tr></tbody>
              </table>
              <div class="scroll">${I.triL()}<div class="thumb"></div>${I.triR()}</div>
            </div>
          </div>
          <div class="totals"><label for="vat">(в т.ч.):</label>
            <div class="field"><input id="vat" type="text" value="0,00"></div><span class="cur">BYN</span></div>
          <a class="link extra" href="#">Скрыть дополнительные реквизиты</a>
          <div class="row inv"><span class="cap">Счет-фактура:</span><button class="btn invbtn">Выписать счет-фактуру</button></div>
          <div class="foot">
            <label class="lc" for="com">Комментарий:</label><div class="field comment"><input id="com" type="text"></div>
            <label class="lr" for="resp">Ответственный:</label>
            <div class="field resp"><input id="resp" type="text" value="admin">${this.drop()}${this.opener()}</div>
          </div>
        </main>
      </div>
      <batch-dialog role="dialog" aria-label="Форма подбора партий"></batch-dialog>`;
  }
}
